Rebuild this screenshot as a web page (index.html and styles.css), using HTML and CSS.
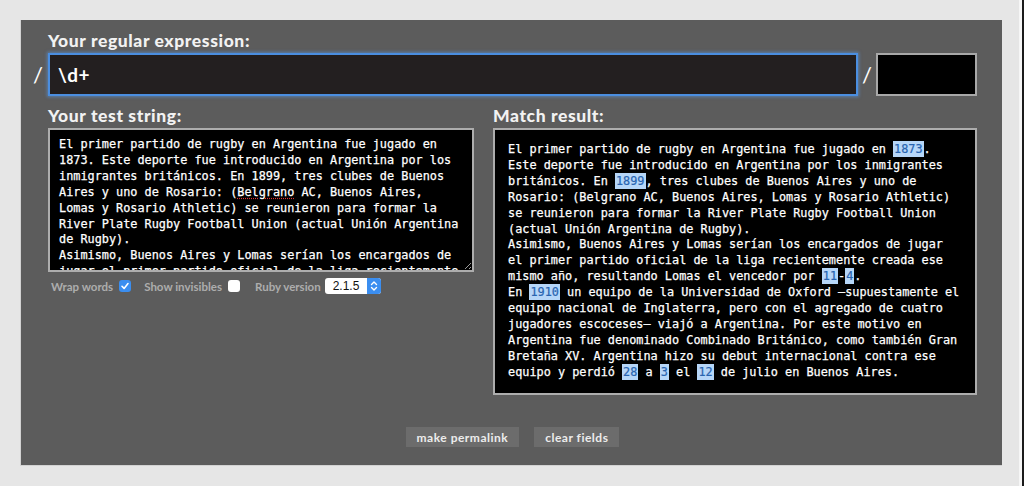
FILE: index.html
```html
<!DOCTYPE html>
<html lang="es">
<head>
<meta charset="utf-8">
<title>Rubular</title>
<link rel="stylesheet" href="styles.css">
</head>
<body>
<div class="page">
  <main class="main">
    <section class="panel">
      <label class="label label-regex" for="regex">Your regular expression:</label>
      <div class="regex-row">
        <span class="slash">/</span>
        <input id="regex" class="regex-input" type="text" value="\d+">
        <span class="slash slash-end">/</span>
        <input class="flags-input" type="text" value="">
      </div>
      <div class="columns">
        <div class="col col-left">
          <div class="label">Your test string:</div>
          <div class="test-input">El primer partido de rugby en Argentina fue jugado en 1873. Este deporte fue introducido en Argentina por los inmigrantes británicos. En 1899, tres clubes de Buenos Aires y uno de Rosario: (<span class="typo">Belgrano</span> AC, Buenos Aires, Lomas y Rosario Athletic) se reunieron para formar la River Plate Rugby Football Union (actual Unión Argentina de Rugby).
Asimismo, Buenos Aires y Lomas serían los encargados de jugar el primer partido oficial de la liga recientemente creada ese mismo año, resultando Lomas el vencedor por 11-4.
En 1910 un equipo de la Universidad de Oxford –supuestamente el equipo nacional de Inglaterra, pero con el agregado de cuatro jugadores escoceses– viajó a Argentina. Por este motivo en Argentina fue denominado Combinado Británico, como también Gran Bretaña XV. Argentina hizo su debut internacional contra ese equipo y perdió 28 a 3 el 12 de julio en Buenos Aires.</div>
          <div class="options">
            <span class="opt">Wrap words</span>
            <span class="check checked"><svg width="12" height="12" viewBox="0 0 12 12"><path d="M3 6.3 L5.1 8.4 L9 3.6" fill="none" stroke="#fff" stroke-width="1.6" stroke-linecap="round" stroke-linejoin="round"/></svg></span>
            <span class="opt opt-gap">Show invisibles</span>
            <span class="check"></span>
            <span class="opt opt-gap2">Ruby version</span>
            <span class="select"><span class="select-value">2.1.5</span><span class="select-arrows"><svg width="14" height="16" viewBox="0 0 14 16"><path d="M4.5 6.5 L7 4 L9.5 6.5 M4.5 9.5 L7 12 L9.5 9.5" fill="none" stroke="#fff" stroke-width="1.4" stroke-linecap="round" stroke-linejoin="round"/></svg></span></span>
          </div>
        </div>
        <div class="col col-right">
          <div class="label">Match result:</div>
          <div class="result">El primer partido de rugby en Argentina fue jugado en <span class="m">1873</span>. Este deporte fue introducido en Argentina por los inmigrantes británicos. En <span class="m">1899</span>, tres clubes de Buenos Aires y uno de Rosario: (Belgrano AC, Buenos Aires, Lomas y Rosario Athletic) se reunieron para formar la River Plate Rugby Football Union (actual Unión Argentina de Rugby).
Asimismo, Buenos Aires y Lomas serían los encargados de jugar el primer partido oficial de la liga recientemente creada ese mismo año, resultando Lomas el vencedor por <span class="m">11</span>-<span class="m">4</span>.
En <span class="m">1910</span> un equipo de la Universidad de Oxford –supuestamente el equipo nacional de Inglaterra, pero con el agregado de cuatro jugadores escoceses– viajó a Argentina. Por este motivo en Argentina fue denominado Combinado Británico, como también Gran Bretaña XV. Argentina hizo su debut internacional contra ese equipo y perdió <span class="m">28</span> a <span class="m">3</span> el <span class="m">12</span> de julio en Buenos Aires.</div>
        </div>
      </div>
      <div class="actions">
        <button class="btn btn-permalink" type="button">make permalink</button>
        <button class="btn btn-clear" type="button">clear fields</button>
      </div>
    </section>
  </main>
  <div class="edge"></div>
</div>
</body>
</html>
```
FILE: styles.css
```css
* { box-sizing: border-box; }
html, body { margin: 0; height: 100%; }
body {
  background: #e6e6e6;
  font-family: "Lato", "Liberation Sans", sans-serif;
  overflow: hidden;
}
.page { display: flex; height: 486px; }
.main { flex: 1; padding: 20px 0 0 20px; }
.edge {
  width: 5px;
  border-left: 3px solid #f6f6f6;
  background: #1a1a1a;
}
.panel {
  width: 982px;
  height: 446px;
  background: #5c5c5c;
  border-left: 1px solid #d2d2d2;
  border-bottom: 1px solid #d2d2d2;
  padding: 11px 25px 18px 11px;
  display: flex;
  flex-direction: column;
}
.label {
  display: block;
  color: #f2f2f2;
  font-weight: 900;
  font-size: 17.5px;
  line-height: 20px;
  letter-spacing: 0.6px;
}
.label-regex { margin-left: 16px; }
.regex-row {
  display: flex;
  align-items: center;
  height: 43px;
  margin-top: 2px;
}
.slash {
  width: 16px;
  padding-left: 1px;
  color: #fff;
  font-size: 22px;
  line-height: 43px;
}
.slash-end { width: 18px; padding-left: 4px; }
.regex-input {
  flex: 1;
  height: 43px;
  background: #231f20;
  border: 2px solid #4b8ee0;
  box-shadow: 0 0 3px 1px rgba(90, 155, 235, 0.55);
  color: #fff;
  font-family: "Lato", "Liberation Sans", sans-serif;
  font-weight: 700;
  font-size: 19px;
  letter-spacing: 0.4px;
  padding: 0 8px;
  outline: none;
}
.flags-input {
  width: 101px;
  height: 43px;
  background: #000;
  border: 2px solid #a8a8a8;
  outline: none;
}
.columns {
  display: flex;
  gap: 19px;
  margin-left: 16px;
  margin-top: 10px;
}
.col-left { width: 426px; }
.col-right { width: 484px; }
.col .label { margin-bottom: 2px; }
.test-input, .result {
  background: #000;
  border: 2px solid #adadad;
  color: #fff;
  font-family: "DejaVu Sans Mono", "Liberation Mono", monospace;
  font-size: 11.85px;
  line-height: 15.9px;
  white-space: pre-wrap;
  -webkit-text-stroke: 0.25px #fff;
}
.test-input {
  height: 144px;
  padding: 7px 10px 0 9px;
  overflow: hidden;
  resize: both;
}
.typo { text-decoration: underline dotted #d33; text-underline-offset: 2px; }
.result { padding: 12px 12px 12px 13px; }
.m {
  background: #b6d6f8;
  color: #2864b0;
  -webkit-text-stroke: 0.2px #2864b0;
  padding: 1px 1px;
}
.options {
  display: flex;
  align-items: center;
  height: 16px;
  margin-top: 6px;
  padding-left: 3px;
  color: #adadad;
  font-size: 11.5px;
  font-weight: 700;
}
.check {
  width: 12px;
  height: 12px;
  margin-left: 6px;
  border-radius: 3px;
  background: #fff;
  display: flex;
}
.check.checked { background: #3b8ef0; }
.opt-gap { margin-left: 13px; }
.opt-gap2 { margin-left: 15px; }
.select {
  display: flex;
  margin-left: 4px;
  width: 56px;
  height: 16px;
  background: #fff;
  border-radius: 3px;
  overflow: hidden;
}
.select-value {
  flex: 1;
  color: #111;
  font-family: "Liberation Sans", sans-serif;
  font-weight: 400;
  font-size: 12px;
  line-height: 16px;
  padding-left: 8px;
}
.select-arrows {
  width: 14px;
  background: #3b8ef0;
  display: flex;
}
.actions {
  margin-top: auto;
  margin-left: 16px;
  display: flex;
  justify-content: center;
  gap: 15px;
}
.btn {
  height: 20px;
  background: #6c6c6c;
  border: none;
  color: #ececec;
  font-family: "Lato", "Liberation Sans", sans-serif;
  font-weight: 700;
  font-size: 12px;
  letter-spacing: 0.5px;
  padding: 0 11px;
}
```
